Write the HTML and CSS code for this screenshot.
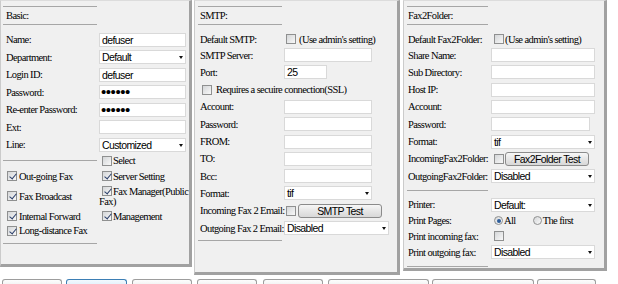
FILE: index.html
```html
<!DOCTYPE html>
<html>
<head>
<meta charset="utf-8">
<title>User settings</title>
<link rel="stylesheet" href="styles.css">
</head>
<body>
<div class="panels">
  <section class="panel p1">
    <div class="head">Basic:</div>
    <div class="rows">
      <div class="row"><span class="lab">Name:</span><span class="in w87">defuser</span></div>
      <div class="row"><span class="lab">Department:</span><span class="in sel w87">Default</span></div>
      <div class="row"><span class="lab">Login ID:</span><span class="in w87">defuser</span></div>
      <div class="row"><span class="lab">Password:</span><span class="in pw w87">••••••</span></div>
      <div class="row"><span class="lab">Re-enter Password:</span><span class="in pw w87">••••••</span></div>
      <div class="row"><span class="lab">Ext:</span><span class="in w87"></span></div>
      <div class="row"><span class="lab">Line:</span><span class="in sel w87">Customized</span></div>
    </div>
    <div class="perm">
      <div class="c l"><div class="hr"></div></div>
      <div class="c r"><span class="cb"></span>Select</div>
      <div class="c l"><span class="cb on"></span>Out-going Fax</div>
      <div class="c r"><span class="cb on"></span>Server Setting</div>
      <div class="c l"><span class="cb on"></span>Fax Broadcast</div>
      <div class="c r"><div class="wrap"><span class="cb on"></span>Fax Manager(Public<br>Fax)</div></div>
      <div class="c l"><span class="cb on"></span>Internal Forward</div>
      <div class="c r"><span class="cb on"></span>Management</div>
      <div class="c l"><span class="cb on"></span>Long-distance Fax</div>
      <div class="c r"></div>
      <div class="c l"><div class="hr"></div></div>
      <div class="c r"></div>
    </div>
  </section>

  <section class="panel p2">
    <div class="head">SMTP:</div>
    <div class="rows">
      <div class="row first"><span class="lab">Default SMTP:</span><span class="cb dflt"></span><span class="note">(Use admin's setting)</span></div>
      <div class="row"><span class="lab">SMTP Server:</span><span class="in w88"></span></div>
      <div class="row"><span class="lab">Port:</span><span class="in w43">25</span></div>
      <div class="row ssl"><span class="cb"></span>Requires a secuire connection(SSL)</div>
      <div class="row"><span class="lab">Account:</span><span class="in w88"></span></div>
      <div class="row"><span class="lab">Password:</span><span class="in w88"></span></div>
      <div class="row"><span class="lab">FROM:</span><span class="in w88"></span></div>
      <div class="row"><span class="lab">TO:</span><span class="in w88"></span></div>
      <div class="row"><span class="lab">Bcc:</span><span class="in w88"></span></div>
      <div class="row"><span class="lab">Format:</span><span class="in sel w88">tif</span></div>
      <div class="row"><span class="lab">Incoming Fax 2 Email:</span><span class="cb inc"></span><span class="btn">SMTP Test</span></div>
      <div class="row"><span class="lab">Outgoing Fax 2 Email:</span><span class="in sel w105">Disabled</span></div>
      <div class="row hrrow"><div class="hr"></div></div>
    </div>
  </section>

  <section class="panel p3">
    <div class="head">Fax2Folder:</div>
    <div class="rows">
      <div class="row first"><span class="lab">Default Fax2Folder:</span><span class="cb dflt"></span><span class="note">(Use admin's setting)</span></div>
      <div class="row"><span class="lab">Share Name:</span><span class="in w104"></span></div>
      <div class="row"><span class="lab">Sub Directory:</span><span class="in w104"></span></div>
      <div class="row"><span class="lab">Host IP:</span><span class="in w104"></span></div>
      <div class="row"><span class="lab">Account:</span><span class="in w104"></span></div>
      <div class="row"><span class="lab">Password:</span><span class="in w99"></span></div>
      <div class="row"><span class="lab">Format:</span><span class="in sel w104">tif</span></div>
      <div class="row"><span class="lab">IncomingFax2Folder:</span><span class="cb inc"></span><span class="btn">Fax2Folder Test</span></div>
      <div class="row"><span class="lab">OutgoingFax2Folder:</span><span class="in sel w104">Disabled</span></div>
      <div class="row hrrow"><div class="hr"></div></div>
      <div class="row pr1"><span class="lab">Printer:</span><span class="in sel w104">Default:</span></div>
      <div class="row pr2"><span class="lab">Print Pages:</span><span class="rd on"></span><span class="rtxt">All</span><span class="rd second"></span><span class="rtxt">The first</span></div>
      <div class="row pr3"><span class="lab">Print incoming fax:</span><span class="cb dflt"></span></div>
      <div class="row pr4"><span class="lab">Print outgoing fax:</span><span class="in sel w104">Disabled</span></div>
      <div class="row hrlast"><div class="hr"></div></div>
    </div>
  </section>
</div>

<div class="tabs">
  <span class="tab"></span>
  <span class="tab active"></span>
  <span class="tab"></span>
  <span class="tab"></span>
  <span class="tab"></span>
  <span class="tab"></span>
  <span class="tab"></span>
  <span class="tab"></span>
</div>
</body>
</html>
```

FILE: styles.css
```css
* { box-sizing: border-box; }
html, body { margin: 0; padding: 0; background: #fff; }
body {
  width: 618px;
  height: 284px;
  overflow: hidden;
  font-family: "Liberation Serif", "Times New Roman", serif;
  font-size: 10.5px;
  letter-spacing: -0.6px;
  color: #000;
}

.panels { display: flex; align-items: flex-start; }

.panel {
  background: #f0f0f0;
  border-left: 1px solid #cbcbcb;
  border-top: 1px solid #dcdcdc;
  border-right: 3px solid #a1a1a1;
  border-bottom: 3px solid #a1a1a1;
  padding-left: var(--pad);
  flex: none;
}
.p1 { width: 192px; height: 267px; --pad: 2px; --hw: 94px; --lw: 96px; --tp: 3px; --rh: 17.5px; }
.p2 { width: 206px; height: 275px; margin-left: 2px; --pad: 3px; --hw: 84px; --lw: 86px; --tp: 2px; --rh: 17.3px; }
.p3 { width: 204px; height: 271px; margin-left: 3px; --pad: 3px; --hw: 81px; --lw: 84px; --tp: 1px; --rh: 17.3px; }

.head {
  margin-top: 5px;
  width: var(--hw);
  height: 19px;
  border-top: 1px solid #a6a6a6;
  border-bottom: 1px solid #a6a6a6;
  line-height: 17px;
  padding-left: var(--tp);
}

.rows { margin-top: 7px; }
.p1 .rows { margin-top: 6px; }

.row {
  display: flex;
  align-items: center;
  height: var(--rh);
  white-space: nowrap;
}
.row.first { height: 14.4px; }
.p2 .hrrow { height: 8.6px; }
.p3 .hrrow { height: 11.3px; }
.p3 .pr1 { height: 17px; }
.p3 .pr2 { height: 15.5px; }
.p3 .pr3 { height: 15.5px; }
.p3 .pr4 { height: 16px; }
.p3 .hrlast { height: 8.5px; align-items: flex-start; }
.p3 .hrlast .hr { margin-top: 6px; }

.lab {
  width: var(--lw);
  flex: none;
  padding-left: var(--tp);
}

.hr {
  width: var(--hw);
  border-top: 1px solid #a6a6a6;
}

.in {
  position: relative;
  flex: none;
  height: 14px;
  border: 1px solid #d9d9d9;
  background: #fff;
  font-family: "Liberation Sans", Arial, sans-serif;
  font-size: 10.5px;
  letter-spacing: -0.6px;
  line-height: 12px;
  padding-left: 2px;
}
.in.pw { font-size: 15px; letter-spacing: -0.45px; line-height: 11px; padding-left: 1px; }
.sel::after {
  content: "";
  position: absolute;
  right: 2px;
  top: 5px;
  border-left: 2.5px solid transparent;
  border-right: 2.5px solid transparent;
  border-top: 3px solid #111;
}
.w87 { width: 87px; }
.w88 { width: 88px; }
.w43 { width: 43px; }
.w105 { width: 105px; }
.w104 { width: 104px; }
.w99 { width: 99px; }

/* checkboxes */
.cb {
  position: relative;
  display: inline-block;
  flex: none;
  width: 10px;
  height: 10px;
  border: 1px solid #8f9090;
  background: linear-gradient(135deg, #d4d6d8, #f8f8f8);
}
.cb.on::after {
  content: "";
  position: absolute;
  left: 2.5px;
  top: 0;
  width: 3px;
  height: 6px;
  border: solid #2b3f6b;
  border-width: 0 1.5px 1.5px 0;
  transform: rotate(40deg);
}

.p2 .cb.dflt { margin-left: 2px; margin-right: 3px; }
.p2 .cb.inc { margin-left: 2px; margin-right: 2px; }
.p3 .cb.dflt { margin-left: 3px; margin-right: 1px; }
.p3 .cb.inc { margin-left: 3px; margin-right: 1px; }
.ssl { padding-left: 4px; }
.ssl .cb { margin-right: 4px; }

/* radios */
.rd {
  position: relative;
  display: inline-block;
  flex: none;
  width: 9px;
  height: 9px;
  border-radius: 50%;
  border: 1px solid #8f9090;
  background: linear-gradient(135deg, #d4d6d8, #fafafa);
  margin-left: 3px;
}
.rd.on::after {
  content: "";
  position: absolute;
  left: 1.5px;
  top: 1.5px;
  width: 4px;
  height: 4px;
  border-radius: 50%;
  background: #2d5d9a;
}
.rd.second { margin-left: 17px; }
.rtxt { margin-left: 1px; }

/* buttons */
.btn {
  flex: none;
  width: 84px;
  height: 14px;
  border: 1px solid #8b8b8b;
  border-radius: 3px;
  background: linear-gradient(#f7f7f7, #e6e6e6 50%, #d8d8d8);
  font-family: "Liberation Sans", Arial, sans-serif;
  font-size: 10.5px;
  letter-spacing: -0.6px;
  line-height: 12px;
  text-align: center;
}

/* permissions grid in Basic panel */
.perm {
  display: grid;
  grid-template-columns: 96px 1fr;
  grid-template-rows: 14px 17px 23.5px 16px 13px 12px;
}
.perm .c { display: flex; align-items: center; white-space: nowrap; }
.perm .l { padding-left: 4px; }
.perm .l .hr { margin-left: -4px; }
.perm .l .cb { margin-right: 2px; }
.perm .r { padding-left: 3px; }
.perm .r .cb { margin-right: 1px; }
.perm .wrap { line-height: 10px; margin-left: -3px; }
.perm .wrap .cb { margin-left: 3px; vertical-align: -1px; }

/* bottom tabs (only their tops are visible) */
.tabs { display: flex; margin-top: 4px; height: 5px; }
.tab {
  flex: none;
  height: 5px;
  border: 1px solid #9d9d9d;
  border-bottom: 0;
  border-radius: 3px 3px 0 0;
  background: linear-gradient(#fdfdfd, #f4f4f4);
}
.tab.active { border-color: #3d7fb5; background: linear-gradient(#f2f9fe, #e6f2fb); }
.tab:nth-child(1) { width: 60px; margin-left: 2px; }
.tab:nth-child(2) { width: 61px; margin-left: 4px; }
.tab:nth-child(3) { width: 60px; margin-left: 5px; }
.tab:nth-child(4) { width: 60px; margin-left: 5px; }
.tab:nth-child(5) { width: 60px; margin-left: 6px; }
.tab:nth-child(6) { width: 101px; margin-left: 5px; }
.tab:nth-child(7) { width: 102px; margin-left: 3px; }
.tab:nth-child(8) { width: 59px; margin-left: 3px; }
```
